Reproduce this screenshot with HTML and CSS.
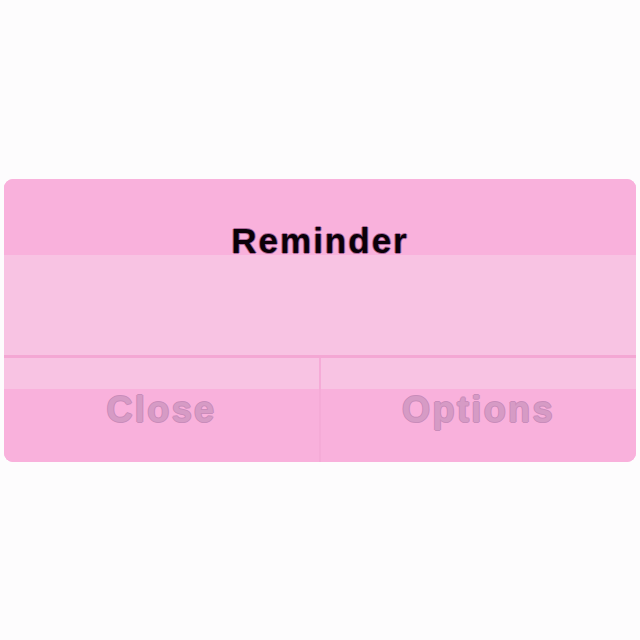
FILE: index.html
```html
<!DOCTYPE html>
<html>
<head>
<meta charset="utf-8">
<link rel="stylesheet" href="styles.css">
</head>
<body>
<div class="page">
  <div class="card">
    <div class="head">
      <div class="title">Reminder</div>
    </div>
    <div class="sep"></div>
    <div class="actions">
      <div class="btn">Close</div>
      <div class="divider"></div>
      <div class="btn">Options</div>
    </div>
  </div>
</div>
</body>
</html>
```
FILE: styles.css
```css
html, body {
  margin: 0;
  padding: 0;
  background: #fdfcfd;
}
.page {
  height: 640px;
  display: flex;
  flex-direction: column;
  justify-content: center;
  padding: 0 4px;
  box-sizing: border-box;
  font-family: "Liberation Sans", Arial, sans-serif;
}
.card {
  height: 283px;
  border-radius: 9px;
  overflow: hidden;
  display: flex;
  flex-direction: column;
  background: #f9b1dc;
}
.head {
  height: 176px;
  background: linear-gradient(to bottom, #f9b1dc 0, #f9b1dc 76px, #f8c3e3 76px, #f8c3e3 100%);
  text-align: center;
  box-sizing: border-box;
  padding-top: 42px;
}
.title {
  font-size: 35px;
  line-height: 40px;
  font-weight: bold;
  letter-spacing: 2px;
  color: #0a0008;
  text-shadow: 1px 0 0 #b06a9c, -1px 0 0 #b06a9c, 0 1px 0 #b06a9c, 0 -1px 0 #b06a9c;
}
.sep {
  height: 3px;
  background: #f4a7d4;
}
.actions {
  flex: 1;
  display: grid;
  grid-template-columns: 1fr 2px 1fr;
  background: linear-gradient(to bottom, #f8c3e3 0, #f8c3e3 31px, #f9b1dc 31px, #f9b1dc 100%);
}
.divider {
  background: #f5abd7;
}
.btn {
  display: flex;
  align-items: center;
  justify-content: center;
  font-size: 36px;
  font-weight: bold;
  letter-spacing: 2.4px;
  color: #d69bc5;
  text-shadow: 1px 0 0 #c98cba, -1px 0 0 #c98cba, 0 1px 0 #c98cba, 0 -1px 0 #c98cba;
  padding-top: 1px;
}
```
